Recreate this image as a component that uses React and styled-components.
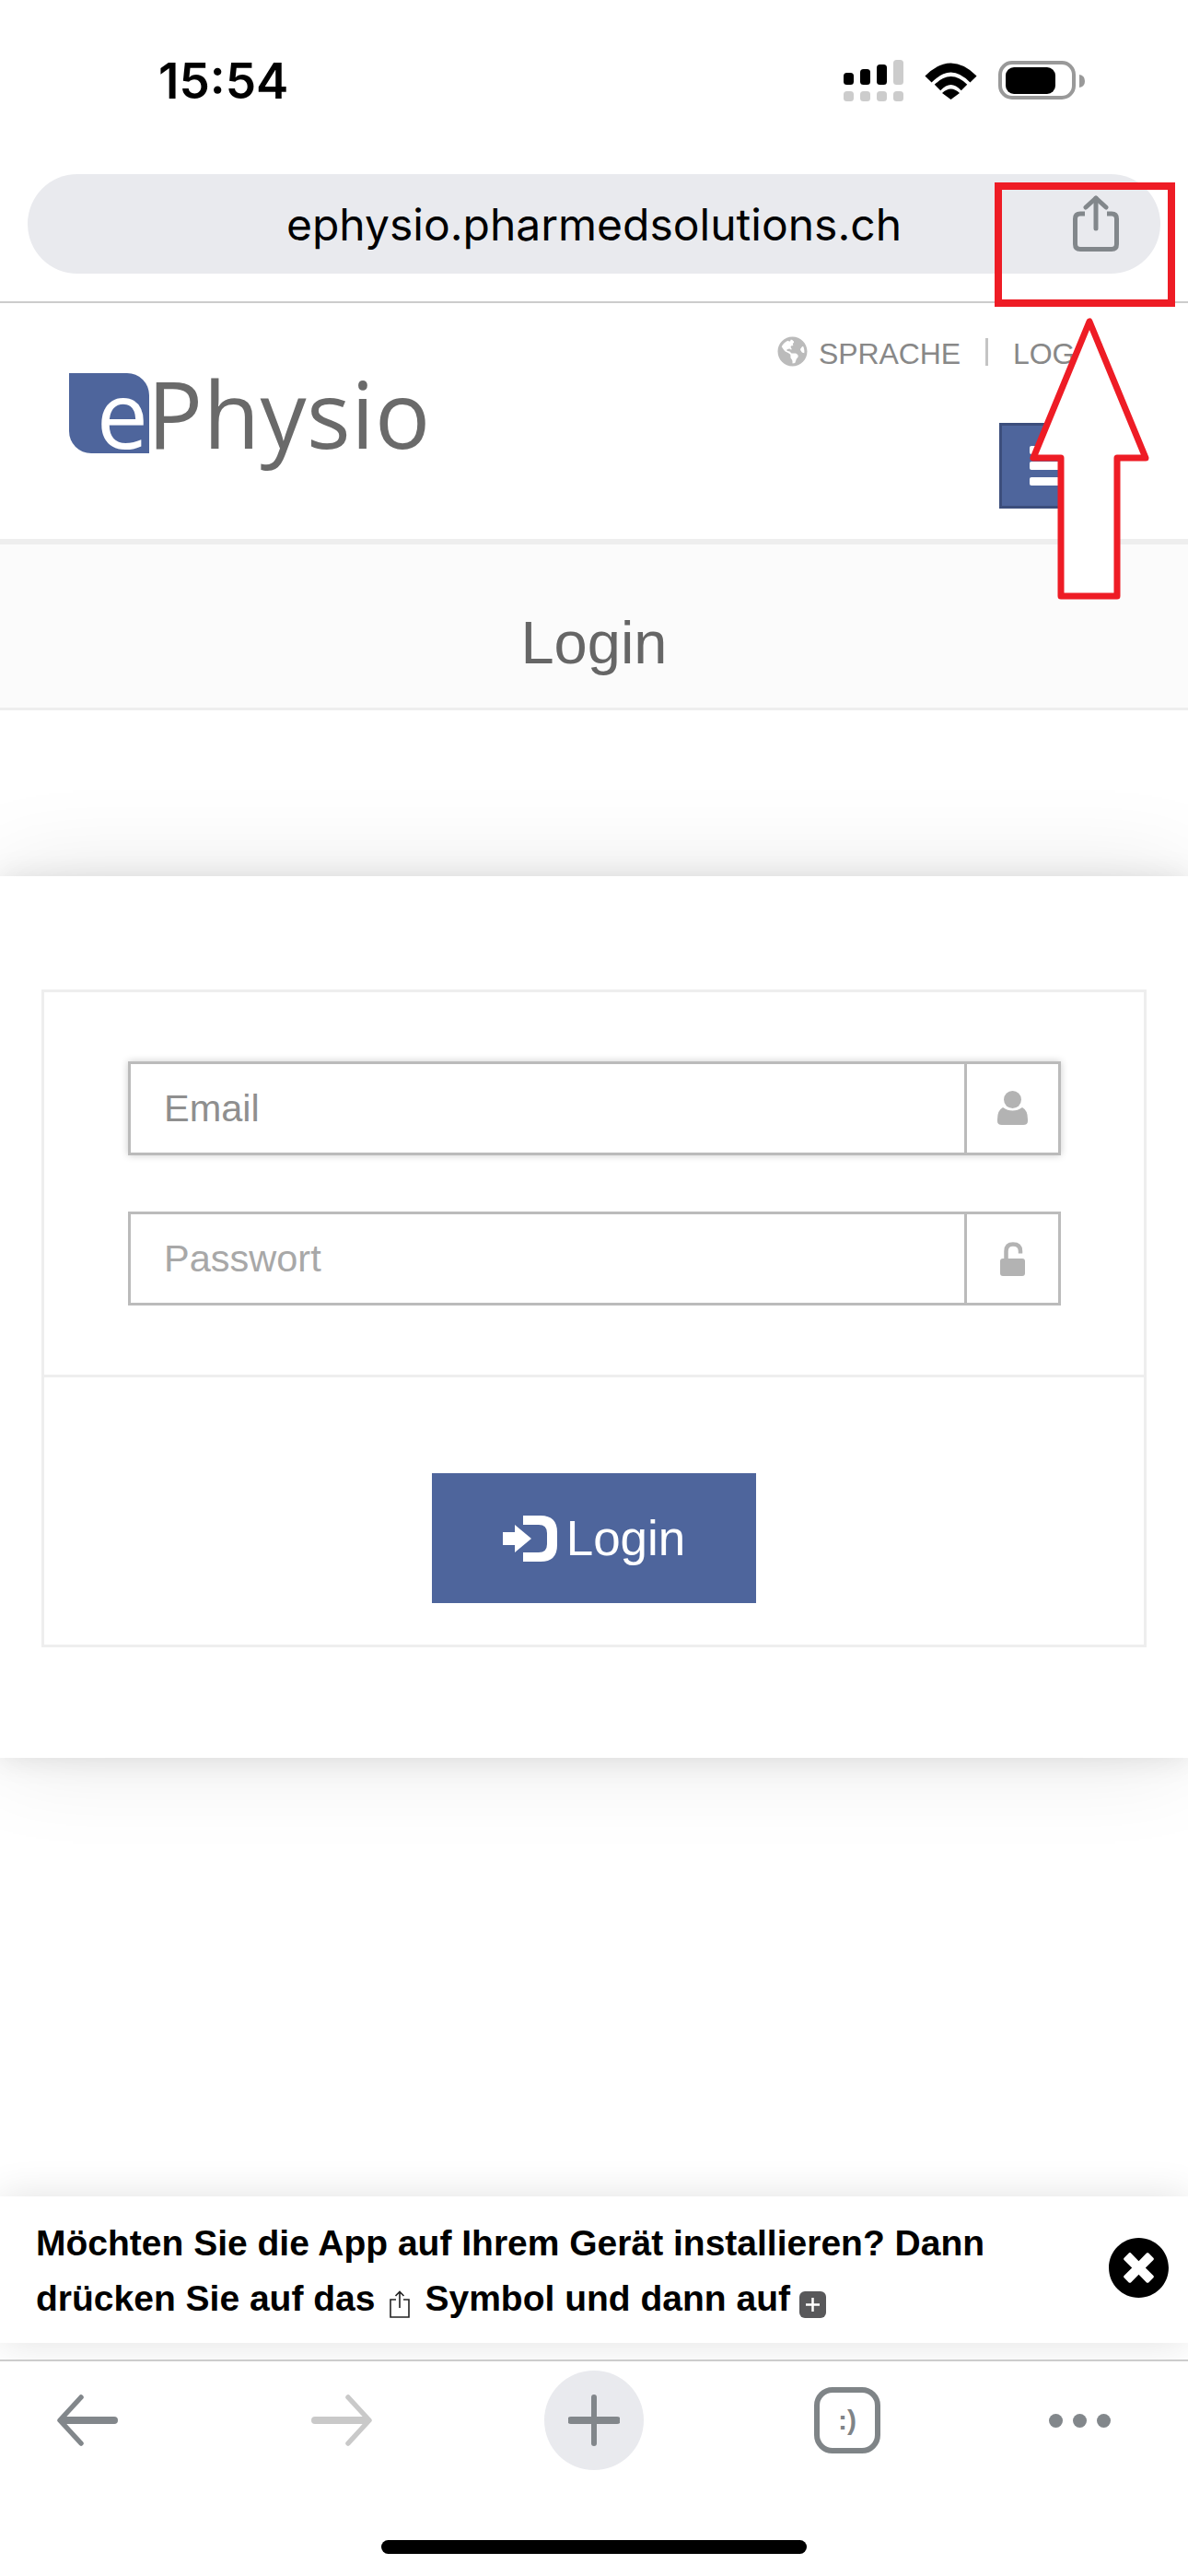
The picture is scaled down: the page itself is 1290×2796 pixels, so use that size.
import styled, { createGlobalStyle } from "styled-components";
import { FaGlobeAmericas, FaTimesCircle } from "react-icons/fa";

const GlobalStyle = createGlobalStyle`
  html, body {
    margin: 0;
    padding: 0;
    background: #fff;
  }
  * {
    box-sizing: border-box;
  }
`;

const Page = styled.div`
  position: relative;
  width: 1290px;
  height: 2796px;
  overflow: hidden;
  display: flex;
  flex-direction: column;
  background: #fff;
  font-family: "Liberation Sans", Arial, sans-serif;
`;

const StatusBar = styled.div`
  height: 189px;
  padding: 63px 112px 0 172px;
  display: flex;
  justify-content: space-between;
  align-items: flex-start;
`;
const Clock = styled.div`
  font-family: Inter, sans-serif;
  font-size: 53px;
  font-weight: 600;
  line-height: 50px;
  color: #000;
`;

const BrowserBar = styled.div`
  height: 140px;
  padding: 0 30px;
  border-bottom: 2px solid #ccc;
`;
const UrlPill = styled.div`
  height: 108px;
  border-radius: 54px;
  background: #e9eaee;
  display: grid;
  grid-template-columns: 1fr auto 1fr;
  align-items: center;
`;
const UrlText = styled.div`
  grid-column: 2;
  font-family: Inter, sans-serif;
  font-size: 48px;
  color: #000;
`;
const ShareSlot = styled.div`
  grid-column: 3;
  justify-self: end;
  display: flex;
  padding-right: 45px;
`;

const SiteHeader = styled.header`
  height: 262px;
  display: flex;
  justify-content: space-between;
  border-bottom: 6px solid #eee;
`;
const Logo = styled.div`
  display: flex;
  align-items: flex-start;
  padding: 76px 0 0 75px;
  font-family: "Open Sans", sans-serif;
  font-size: 100px;
  font-weight: 500;
  line-height: 87px;
  filter: blur(0.7px);
`;
const LogoMark = styled.div`
  width: 87px;
  height: 87px;
  display: flex;
  justify-content: flex-end;
  padding-right: 1px;
  background: #4e659c;
  color: #fff;
  border-radius: 0 24px 0 24px;
`;
const LogoName = styled.div`
  margin-left: -2px;
  color: #6a6a6a;
  letter-spacing: 0.5px;
`;
const HeaderRight = styled.div`
  width: 446px;
  padding-top: 36px;
  display: flex;
  flex-direction: column;
`;
const LangRow = styled.div`
  height: 33px;
  display: flex;
  align-items: center;
  color: #bbb;
  font-size: 32px;
`;
const TopLink = styled.span`
  margin: 5px 0 0 ${(p) => p.$left}px;
  color: #888;
  letter-spacing: -0.1px;
`;
const Sep = styled.span`
  width: 3px;
  height: 30px;
  margin-left: 27px;
  background: #c4c4c4;
`;
const MenuButton = styled.div`
  width: 120px;
  height: 93px;
  margin: 61px 0 0 241px;
  padding-left: 30px;
  display: flex;
  flex-direction: column;
  justify-content: center;
  gap: 8px;
  background: #4e659c;
  border: 3px solid #3c4e7c;
`;
const MenuBar = styled.span`
  width: 58px;
  height: 9px;
  border-radius: 2px;
  background: #fff;
`;

const TitleBar = styled.div`
  height: 180px;
  padding-top: 36px;
  display: flex;
  align-items: center;
  justify-content: center;
  background: #fbfbfb;
  border-bottom: 3px solid #eee;
  color: #666;
  font-size: 65px;
`;

const Card = styled.section`
  height: 957px;
  margin-top: 180px;
  padding: 123px 45px 0;
  background: #fff;
  box-shadow: 0 0 100px rgba(0, 0, 0, 0.1), 0 0 30px rgba(0, 0, 0, 0.1);
`;
const Panel = styled.div`
  height: 714px;
  border: 3px solid #eee;
  display: flex;
  flex-direction: column;
`;
const Fields = styled.div`
  height: 418px;
  padding: 75px 90px 0 91px;
  display: flex;
  flex-direction: column;
  gap: 61px;
  border-bottom: 3px solid #eee;
`;
const InputGroup = styled.div`
  height: 102px;
  display: flex;
  border: 3px solid #bbb;
  box-shadow: ${(p) => (p.$focused ? "0 0 8px rgba(0, 0, 0, 0.2)" : "none")};
`;
const TextInput = styled.input`
  flex: 1;
  min-width: 0;
  padding: 0 36px;
  border: none;
  outline: none;
  background: transparent;
  font-family: "Liberation Sans", Arial, sans-serif;
  font-size: 41.5px;
  &::placeholder {
    color: ${(p) => (p.$focused ? "#8f8f8f" : "#a8a8a8")};
    opacity: 1;
  }
`;
const Addon = styled.div`
  width: 102px;
  display: flex;
  align-items: center;
  justify-content: center;
  border-left: 3px solid #bbb;
`;
const Actions = styled.div`
  flex: 1;
  display: flex;
  justify-content: center;
  padding-top: 104px;
`;
const LoginButton = styled.button`
  width: 352px;
  height: 141px;
  display: flex;
  align-items: center;
  justify-content: center;
  gap: 10px;
  border: none;
  background: #4e659c;
  color: #fff;
  font-family: "Liberation Sans", Arial, sans-serif;
  font-size: 53px;
`;

const InstallBanner = styled.aside`
  height: 159px;
  margin-top: 476px;
  padding: 21px 20px 0 39px;
  display: flex;
  justify-content: space-between;
  align-items: flex-start;
  background: #fff;
  box-shadow: 0 0 40px rgba(0, 0, 0, 0.12);
`;
const BannerText = styled.p`
  margin: 0;
  width: 1100px;
  font-size: 39px;
  font-weight: 700;
  line-height: 60px;
  color: #000;
`;
const InlineIcon = styled.svg`
  display: inline-block;
  vertical-align: -8px;
  margin: 0 ${(p) => p.$space}px;
`;
const CloseButton = styled.div`
  display: flex;
  margin-top: 23px;
  color: #000;
  background: radial-gradient(circle, #fff 45%, transparent 46%);
`;

const Toolbar = styled.nav`
  position: relative;
  flex: 1;
  margin-top: 18px;
  padding-top: 10px;
  display: flex;
  flex-direction: column;
  align-items: center;
  background: #fff;
  border-top: 2px solid #ccc;
`;
const ToolRow = styled.div`
  width: 100%;
  height: 108px;
  display: flex;
  align-items: center;
`;
const ToolSlot = styled.div`
  margin-left: ${(p) => p.$left}px;
  display: flex;
  align-items: center;
  justify-content: center;
`;
const NavArrow = styled.svg`
  color: ${(p) => (p.$disabled ? "#c9c9c9" : "#82878b")};
  transform: ${(p) => (p.$flip ? "scaleX(-1)" : "none")};
`;
const NewTab = styled.div`
  width: 108px;
  height: 108px;
  display: flex;
  align-items: center;
  justify-content: center;
  border-radius: 50%;
  background: #e9eaee;
`;
const TabIcon = styled.div`
  width: 72px;
  height: 72px;
  display: flex;
  align-items: center;
  justify-content: center;
  border: 6px solid #7f8487;
  border-radius: 20px;
  color: #7f8487;
  font-size: 30px;
  font-weight: 700;
`;
const Dots = styled.div`
  display: flex;
  gap: 11px;
`;
const Dot = styled.span`
  width: 15px;
  height: 15px;
  border-radius: 50%;
  background: #82878b;
`;
const HomeBar = styled.div`
  width: 462px;
  height: 15px;
  margin-top: 76px;
  border-radius: 8px;
  background: #000;
`;

const RedBox = styled.div`
  position: absolute;
  left: 1080px;
  top: 198px;
  width: 196px;
  height: 135px;
  border: 8px solid #ee1c25;
`;
const RedArrow = styled.svg`
  position: absolute;
  left: 1110px;
  top: 340px;
`;

function StatusIcons() {
  return (
    <svg width="262" height="50" viewBox="916 62 262 50">
      <rect x="916" y="78" width="11" height="13" rx="3.5" fill="#000" />
      <rect x="934" y="74" width="11" height="17" rx="3.5" fill="#000" />
      <rect x="952" y="69" width="11" height="22" rx="3.5" fill="#000" />
      <rect x="970" y="64" width="11" height="27" rx="3.5" fill="#ccc" />
      <rect x="916" y="98" width="11" height="11" rx="3.5" fill="#ccc" />
      <rect x="934" y="98" width="11" height="11" rx="3.5" fill="#ccc" />
      <rect x="952" y="98" width="11" height="11" rx="3.5" fill="#ccc" />
      <rect x="970" y="98" width="11" height="11" rx="3.5" fill="#ccc" />
      <path d="M1008 85 Q1032.5 60 1057 85" fill="none" stroke="#000" strokeWidth="10" />
      <path d="M1018 94 Q1032.5 79 1047 94" fill="none" stroke="#000" strokeWidth="9" />
      <path d="M1023 100 Q1032.5 91 1042 100 L1032.5 107Z" fill="#000" />
      <rect x="1086" y="67" width="80" height="38" rx="13" fill="none" stroke="#999" strokeWidth="4" />
      <rect x="1092" y="72" width="54" height="29" rx="9" fill="#000" />
      <path d="M1172 80 Q1178 81 1178 87 Q1178 93 1172 94Z" fill="#999" />
    </svg>
  );
}

function ShareIcon() {
  return (
    <svg width="50" height="62" viewBox="0 0 50 62" fill="none" stroke="#82878b" strokeWidth="5">
      <path d="M13 20 H8 Q2.5 20 2.5 25.5 V53 Q2.5 58.5 8 58.5 H42 Q47.5 58.5 47.5 53 V25.5 Q47.5 20 42 20 H37" />
      <path d="M25 3 V36" strokeLinecap="round" />
      <path d="M14 13 L25 3 L36 13" strokeLinecap="round" strokeLinejoin="round" />
    </svg>
  );
}

function UserIcon() {
  return (
    <svg width="33" height="38" viewBox="0 0 33 38" fill="#b3b3b3">
      <circle cx="16.5" cy="9.5" r="9.5" />
      <path d="M6 18 Q11 21.5 16.5 21.5 Q22 21.5 27 18 Q33 21 33 31 V33 Q33 37 28 37 H5 Q0 37 0 33 V31 Q0 21 6 18Z" />
    </svg>
  );
}

function LockIcon() {
  return (
    <svg width="28" height="37" viewBox="0 0 28 37" fill="none">
      <path d="M6.5 20 V10 Q6.5 2.5 14 2.5 Q22 2.5 22 10 V12.5" stroke="#b3b3b3" strokeWidth="4.5" />
      <rect x="0" y="18" width="27" height="19" rx="3" fill="#b3b3b3" />
    </svg>
  );
}

function SignInIcon() {
  return (
    <svg width="59" height="50" viewBox="0 0 59 50" fill="#fff">
      <polygon points="0,18 13,18 13,10 31,25 13,40 13,32 0,32" />
      <path d="M22 0 H41 Q59 0 59 18 V32 Q59 50 41 50 H22 V40 H39 Q48 40 48 31 V19 Q48 10 39 10 H22 Z" />
    </svg>
  );
}

function BackArrow({ flip, disabled }) {
  return (
    <NavArrow $flip={flip} $disabled={disabled} width="66" height="56" viewBox="0 0 66 56" fill="none" stroke="currentColor" strokeLinecap="round" strokeLinejoin="round">
      <path d="M26 3 L3 28 L26 53" strokeWidth="5.5" />
      <path d="M6 28 H62" strokeWidth="8" />
    </NavArrow>
  );
}

export default function App() {
  return (
    <Page>
      <GlobalStyle />
      <StatusBar>
        <Clock>15:54</Clock>
        <StatusIcons />
      </StatusBar>
      <BrowserBar>
        <UrlPill>
          <UrlText>ephysio.pharmedsolutions.ch</UrlText>
          <ShareSlot>
            <ShareIcon />
          </ShareSlot>
        </UrlPill>
      </BrowserBar>
      <SiteHeader>
        <Logo>
          <LogoMark>e</LogoMark>
          <LogoName>Physio</LogoName>
        </Logo>
        <HeaderRight>
          <LangRow>
            <FaGlobeAmericas size={33} />
            <TopLink $left={12}>SPRACHE</TopLink>
            <Sep />
            <TopLink $left={27}>LOGIN</TopLink>
          </LangRow>
          <MenuButton>
            <MenuBar />
            <MenuBar />
            <MenuBar />
          </MenuButton>
        </HeaderRight>
      </SiteHeader>
      <TitleBar>Login</TitleBar>
      <Card>
        <Panel>
          <Fields>
            <InputGroup $focused>
              <TextInput $focused placeholder="Email" />
              <Addon>
                <UserIcon />
              </Addon>
            </InputGroup>
            <InputGroup>
              <TextInput placeholder="Passwort" />
              <Addon>
                <LockIcon />
              </Addon>
            </InputGroup>
          </Fields>
          <Actions>
            <LoginButton>
              <SignInIcon />
              Login
            </LoginButton>
          </Actions>
        </Panel>
      </Card>
      <InstallBanner>
        <BannerText>
          Möchten Sie die App auf Ihrem Gerät installieren? Dann drücken Sie auf das
          <InlineIcon $space={16} width="22" height="30" viewBox="0 0 22 30" fill="none" stroke="#222" strokeWidth="1.6">
            <path d="M7 10 H1 V29 H21 V10 H15" />
            <path d="M11 1.5 V19 M6.5 6 L11 1.5 L15.5 6" />
          </InlineIcon>
          Symbol und dann auf
          <InlineIcon $space={10} width="29" height="29" viewBox="0 0 29 29" fill="none">
            <rect width="29" height="29" rx="6" fill="#58585a" />
            <path d="M14.5 7 V22 M7 14.5 H22" stroke="#fff" strokeWidth="2.5" />
          </InlineIcon>
        </BannerText>
        <CloseButton>
          <FaTimesCircle size={67} />
        </CloseButton>
      </InstallBanner>
      <Toolbar>
        <ToolRow>
          <ToolSlot $left={62}>
            <BackArrow />
          </ToolSlot>
          <ToolSlot $left={210}>
            <BackArrow flip disabled />
          </ToolSlot>
          <ToolSlot $left={187}>
            <NewTab>
              <svg width="56" height="56" viewBox="0 0 56 56" fill="none" stroke="#82878b" strokeLinecap="round">
                <path d="M28 3 V53" strokeWidth="6" />
                <path d="M3 28 H53" strokeWidth="8" />
              </svg>
            </NewTab>
          </ToolSlot>
          <ToolSlot $left={185}>
            <TabIcon>:)</TabIcon>
          </ToolSlot>
          <ToolSlot $left={183}>
            <Dots>
              <Dot />
              <Dot />
              <Dot />
            </Dots>
          </ToolSlot>
        </ToolRow>
        <HomeBar />
      </Toolbar>
      <RedBox />
      <RedArrow width="145" height="315" viewBox="1110 340 145 315">
        <polygon
          points="1183,349 1122,497 1152,497 1152,647 1213,647 1213,497 1244,497"
          fill="#fff"
          stroke="#ee1c25"
          strokeWidth="7"
          strokeLinejoin="round"
        />
      </RedArrow>
    </Page>
  );
}
